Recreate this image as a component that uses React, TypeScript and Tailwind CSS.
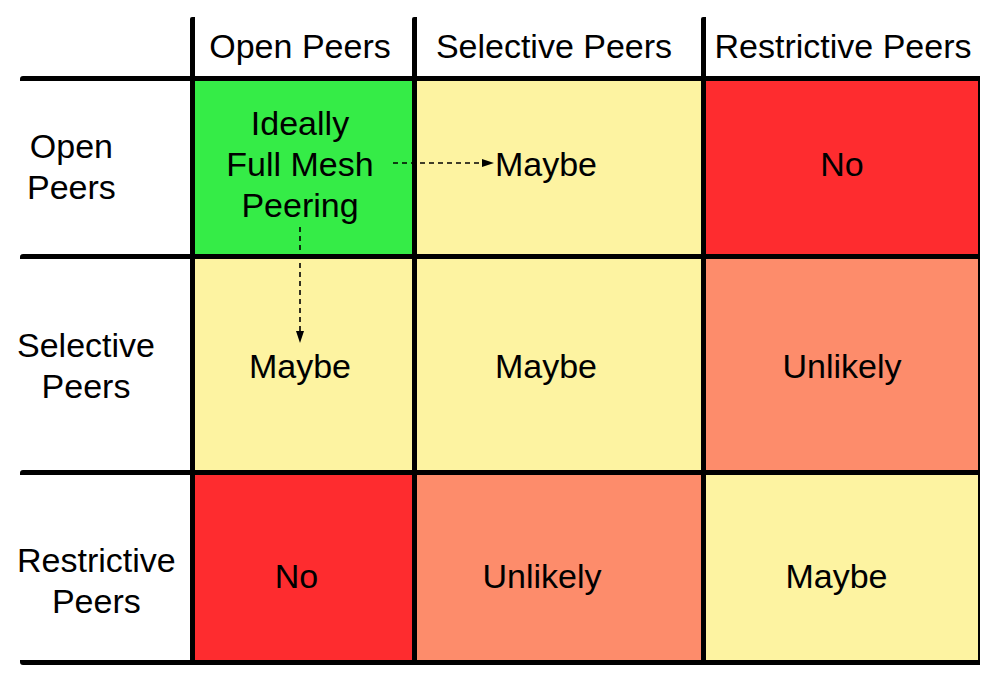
type Cell = { text: string[]; fill: string; pad: string };

const HEADERS = [
  { text: "Open Peers", pad: "pr-[7px]" },
  { text: "Selective Peers", pad: "pr-[10px]" },
  { text: "Restrictive Peers", pad: "" },
];

const ROWS: { label: string[]; labelPad: string; labelShift: string; cells: Cell[] }[] = [
  {
    label: ["Open", "Peers"],
    labelPad: "pb-[2px]",
    labelShift: "ml-[7px]",
    cells: [
      { text: ["Ideally", "Full Mesh", "Peering"], fill: "bg-[#35ec47]", pad: "pr-[7px] pb-[7px]" },
      { text: ["Maybe"], fill: "bg-[#fdf3a1]", pad: "pr-[26px] pb-[7px]" },
      { text: ["No"], fill: "bg-[#fe2c2f]", pad: "pb-[7px]" },
    ],
  },
  {
    label: ["Selective", "Peers"],
    labelPad: "pt-[3px]",
    labelShift: "-ml-[3px]",
    cells: [
      { text: ["Maybe"], fill: "bg-[#fdf3a1]", pad: "pr-[7px] pt-[3px]" },
      { text: ["Maybe"], fill: "bg-[#fdf3a1]", pad: "pr-[26px] pt-[3px]" },
      { text: ["Unlikely"], fill: "bg-[#fd8c6b]", pad: "pt-[3px]" },
    ],
  },
  {
    label: ["Restrictive", "Peers"],
    labelPad: "pt-[26px]",
    labelShift: "-ml-[3px]",
    cells: [
      { text: ["No"], fill: "bg-[#fe2c2f]", pad: "pr-[14px] pt-[18px]" },
      { text: ["Unlikely"], fill: "bg-[#fd8c6b]", pad: "pr-[34px] pt-[18px]" },
      { text: ["Maybe"], fill: "bg-[#fdf3a1]", pad: "pr-[11px] pt-[18px]" },
    ],
  },
];

const ROW_HEIGHTS = ["h-[178px]", "h-[216px]", "h-[195px]"];

export default function App() {
  return (
    <div
      className="relative w-[1000px] h-[685px] bg-white text-black overflow-hidden"
      style={{ fontFamily: '"Liberation Sans", Arial, sans-serif' }}
    >
      <div className="ml-[20px] pt-[17px] grid grid-cols-[170px_222px_289px_279px] text-[34px] leading-[41px]">
        {/* Header row */}
        <div className="h-[59px]" />
        {HEADERS.map((h) => (
          <div
            key={h.text}
            className={`h-[59px] border-l-[5px] border-black rounded-tl-[2px] flex items-center justify-center whitespace-nowrap ${h.pad}`}
          >
            {h.text}
          </div>
        ))}

        {/* Body rows */}
        {ROWS.map((row, r) => {
          const last = r === ROWS.length - 1;
          return [
            <div
              key={`label-${r}`}
              className={`${ROW_HEIGHTS[r]} border-t-[5px] ${last ? "border-b-[5px]" : ""} border-black rounded-l-[3px] flex items-center ${row.labelPad}`}
            >
              <div className={`text-center w-fit ${row.labelShift}`}>
                {row.label.map((l) => (
                  <div key={l}>{l}</div>
                ))}
              </div>
            </div>,
            ...row.cells.map((c, i) => (
              <div
                key={`cell-${r}-${i}`}
                className={`${ROW_HEIGHTS[r]} border-t-[5px] border-l-[5px] ${last ? "border-b-[5px]" : ""} ${i === 2 ? "border-r-2" : ""} border-black ${c.fill} flex flex-col items-center justify-center text-center whitespace-nowrap ${c.pad}`}
              >
                {c.text.map((t) => (
                  <div key={t}>{t}</div>
                ))}
              </div>
            )),
          ];
        })}
      </div>

      {/* Dashed arrows over the grid */}
      <svg className="absolute inset-0 pointer-events-none" width="1000" height="685" viewBox="0 0 1000 685">
        <line x1="393" y1="163" x2="483" y2="163" stroke="#000" strokeWidth="1.6" strokeDasharray="5 4" />
        <polygon points="482,159 494,163 482,167" fill="#000" />
        <line x1="300" y1="227" x2="300" y2="332" stroke="#000" strokeWidth="1.6" strokeDasharray="5 4" />
        <polygon points="296,331 300,343 304,331" fill="#000" />
      </svg>
    </div>
  );
}
